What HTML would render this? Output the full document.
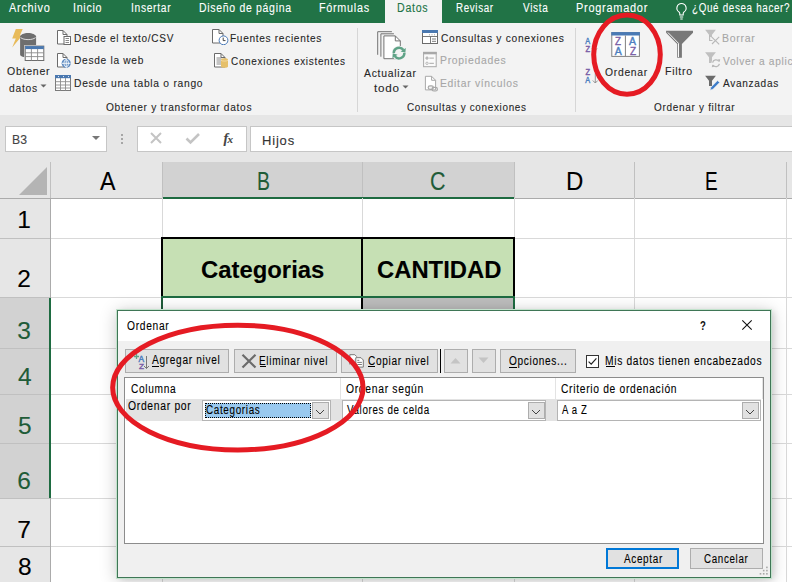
<!DOCTYPE html>
<html><head><meta charset="utf-8"><style>
html,body{margin:0;padding:0}
body{width:792px;height:582px;overflow:hidden;position:relative;background:#fff;font-family:"Liberation Sans",sans-serif}
body>div,body>svg{position:absolute}
.t{white-space:nowrap;-webkit-text-stroke:0.1px currentColor}
</style></head><body>
<div style="left:0px;top:0px;width:792px;height:23px;background:#217346"></div>
<div style="left:385px;top:0px;width:57px;height:23px;background:#f3f3f3"></div>
<div class="t" style="left:9px;top:2.34px;font-size:12px;line-height:12px;letter-spacing:0.8px;transform:scaleX(0.9100);transform-origin:0 0;color:#ffffff">Archivo</div>
<div class="t" style="left:73.42px;top:2.34px;font-size:12px;line-height:12px;letter-spacing:0.8px;transform:scaleX(0.8919);transform-origin:0 0;color:#ffffff">Inicio</div>
<div class="t" style="left:130.68px;top:2.34px;font-size:12px;line-height:12px;letter-spacing:0.8px;transform:scaleX(0.8547);transform-origin:0 0;color:#ffffff">Insertar</div>
<div class="t" style="left:199.2px;top:2.34px;font-size:12px;line-height:12px;letter-spacing:0.8px;transform:scaleX(0.8731);transform-origin:0 0;color:#ffffff">Diseño de página</div>
<div class="t" style="left:318.68px;top:2.34px;font-size:12px;line-height:12px;letter-spacing:0.8px;transform:scaleX(0.9006);transform-origin:0 0;color:#ffffff">Fórmulas</div>
<div class="t" style="left:456.44px;top:2.34px;font-size:12px;line-height:12px;letter-spacing:0.8px;transform:scaleX(0.8146);transform-origin:0 0;color:#ffffff">Revisar</div>
<div class="t" style="left:523px;top:2.34px;font-size:12px;line-height:12px;letter-spacing:0.8px;transform:scaleX(0.8325);transform-origin:0 0;color:#ffffff">Vista</div>
<div class="t" style="left:575.94px;top:2.34px;font-size:12px;line-height:12px;letter-spacing:0.8px;transform:scaleX(0.9144);transform-origin:0 0;color:#ffffff">Programador</div>
<div class="t" style="left:692.18px;top:2.34px;font-size:12px;line-height:12px;letter-spacing:0.8px;transform:scaleX(0.8205);transform-origin:0 0;color:#ffffff">¿Qué desea hacer?</div>
<div class="t" style="left:397.44px;top:2.34px;font-size:12px;line-height:12px;letter-spacing:0.8px;transform:scaleX(0.8869);transform-origin:0 0;color:#217346">Datos</div>
<svg style="left:675px;top:2px;" width="13" height="19" viewBox="0 0 13 19"><path d="M6.5 1.5a4.6 4.6 0 0 0-2.6 8.4c.6.5.9 1.1.9 1.8v1.3h3.4v-1.3c0-.7.3-1.3.9-1.8A4.6 4.6 0 0 0 6.5 1.5z" fill="none" stroke="#fff" stroke-width="1.1"/><path d="M4.8 15h3.4M5.3 17h2.4" stroke="#fff" stroke-width="1.1"/></svg>
<div style="left:0px;top:23px;width:792px;height:92px;background:#f3f3f3"></div>
<div style="left:0px;top:115px;width:792px;height:1px;background:#d4d4d4"></div>
<div style="left:357px;top:28px;width:1px;height:84px;background:#d6d6d6"></div>
<div style="left:575px;top:28px;width:1px;height:84px;background:#d6d6d6"></div>
<div style="left:0px;top:115px;width:792px;height:467px;background:#e6e6e6"></div>
<div style="left:5px;top:126px;width:102px;height:26px;background:#fff;border:1px solid #c6c6c6;box-sizing:border-box"></div>
<div class="t" style="left:11.94px;top:134.34px;font-size:12px;line-height:12px;transform:scaleX(1.0184);transform-origin:0 0;color:#444">B3</div>
<svg style="left:91px;top:135px;" width="10" height="6" viewBox="0 0 10 6"><path d="M1 1h8L5 5z" fill="#777"/></svg>
<div style="left:121px;top:134px;width:2px;height:2px;background:#a6a6a6"></div>
<div style="left:121px;top:138px;width:2px;height:2px;background:#a6a6a6"></div>
<div style="left:121px;top:142px;width:2px;height:2px;background:#a6a6a6"></div>
<div style="left:137px;top:126px;width:110px;height:26px;background:#fff;border:1px solid #c6c6c6;box-sizing:border-box"></div>
<svg style="left:149px;top:131px;" width="14" height="14" viewBox="0 0 14 14"><path d="M2 2L12 12M12 2L2 12" stroke="#c4c4c4" stroke-width="2"/></svg>
<svg style="left:185px;top:132px;" width="16" height="13" viewBox="0 0 16 13"><path d="M1.5 6.5L5.5 10.5L14 2" fill="none" stroke="#c4c4c4" stroke-width="2.6"/></svg>
<div class="t" style="left:223.5px;top:131.5px;font-family:'Liberation Serif',serif;font-style:italic;font-weight:bold;font-size:14px;line-height:14px;color:#444;letter-spacing:-0.8px">f<span style="font-size:11px">x</span></div>
<div style="left:250px;top:126px;width:542px;height:26px;background:#fff;border:1px solid #c6c6c6;border-right:none;box-sizing:border-box"></div>
<div class="t" style="left:261.7px;top:134.52px;font-size:12.5px;line-height:12.5px;letter-spacing:0.8px;transform:scaleX(1.0376);transform-origin:0 0;color:#333">Hijos</div>
<div style="left:50px;top:198px;width:742px;height:384px;background:#fff"></div>
<svg style="left:18px;top:166px;" width="30" height="30" viewBox="0 0 30 30"><path d="M29 1V29H1z" fill="#b4b4b4"/></svg>
<div style="left:163px;top:162px;width:351px;height:36px;background:#d2d2d2"></div>
<div style="left:0px;top:298px;width:50px;height:200px;background:#d2d2d2"></div>
<div style="left:50px;top:162px;width:1px;height:36px;background:#c0c0c0"></div>
<div style="left:162px;top:162px;width:1px;height:36px;background:#c0c0c0"></div>
<div style="left:362px;top:162px;width:1px;height:36px;background:#c0c0c0"></div>
<div style="left:514px;top:162px;width:1px;height:36px;background:#c0c0c0"></div>
<div style="left:634px;top:162px;width:1px;height:36px;background:#c0c0c0"></div>
<div style="left:786px;top:162px;width:1px;height:36px;background:#c0c0c0"></div>
<div style="left:0px;top:198px;width:792px;height:1px;background:#ababab"></div>
<div style="left:163px;top:197px;width:351px;height:2px;background:#1e6b41"></div>
<div style="left:0px;top:238px;width:50px;height:1px;background:#c0c0c0"></div>
<div style="left:0px;top:297px;width:50px;height:1px;background:#c0c0c0"></div>
<div style="left:0px;top:348px;width:50px;height:1px;background:#c0c0c0"></div>
<div style="left:0px;top:394px;width:50px;height:1px;background:#c0c0c0"></div>
<div style="left:0px;top:443px;width:50px;height:1px;background:#c0c0c0"></div>
<div style="left:0px;top:498px;width:50px;height:1px;background:#c0c0c0"></div>
<div style="left:0px;top:546px;width:50px;height:1px;background:#c0c0c0"></div>
<div style="left:50px;top:198px;width:1px;height:384px;background:#ababab"></div>
<div style="left:49px;top:298px;width:2px;height:200px;background:#1e6b41"></div>
<div style="left:162px;top:198px;width:1px;height:384px;background:#d9d9d9"></div>
<div style="left:362px;top:198px;width:1px;height:384px;background:#d9d9d9"></div>
<div style="left:514px;top:198px;width:1px;height:384px;background:#d9d9d9"></div>
<div style="left:634px;top:198px;width:1px;height:384px;background:#d9d9d9"></div>
<div style="left:786px;top:198px;width:1px;height:384px;background:#d9d9d9"></div>
<div style="left:51px;top:238px;width:741px;height:1px;background:#d9d9d9"></div>
<div style="left:51px;top:297px;width:741px;height:1px;background:#d9d9d9"></div>
<div style="left:51px;top:348px;width:741px;height:1px;background:#d9d9d9"></div>
<div style="left:51px;top:394px;width:741px;height:1px;background:#d9d9d9"></div>
<div style="left:51px;top:443px;width:741px;height:1px;background:#d9d9d9"></div>
<div style="left:51px;top:498px;width:741px;height:1px;background:#d9d9d9"></div>
<div style="left:51px;top:546px;width:741px;height:1px;background:#d9d9d9"></div>
<div class="t" style="left:100.02px;top:169.24px;font-size:25px;line-height:25px;transform:scaleX(0.9269);transform-origin:0 0;color:#000">A</div>
<div class="t" style="left:256.94px;top:169.24px;font-size:25px;line-height:25px;transform:scaleX(0.7769);transform-origin:0 0;color:#1f5c38">B</div>
<div class="t" style="left:430.44px;top:169.24px;font-size:25px;line-height:25px;transform:scaleX(0.8563);transform-origin:0 0;color:#1f5c38">C</div>
<div class="t" style="left:566.4px;top:169.24px;font-size:25px;line-height:25px;transform:scaleX(0.9620);transform-origin:0 0;color:#000">D</div>
<div class="t" style="left:704.7px;top:169.24px;font-size:25px;line-height:25px;transform:scaleX(0.7586);transform-origin:0 0;color:#000">E</div>
<div class="t" style="left:17.16px;top:207.76px;font-size:24.5px;line-height:24.5px;color:#000">1</div>
<div class="t" style="left:17.16px;top:267.26px;font-size:24.5px;line-height:24.5px;color:#000">2</div>
<div class="t" style="left:17.16px;top:318.56px;font-size:24.5px;line-height:24.5px;color:#1f5c38">3</div>
<div class="t" style="left:17.96px;top:364.66px;font-size:24.5px;line-height:24.5px;color:#1f5c38">4</div>
<div class="t" style="left:17.96px;top:413.96px;font-size:24.5px;line-height:24.5px;color:#1f5c38">5</div>
<div class="t" style="left:17.16px;top:469.16px;font-size:24.5px;line-height:24.5px;color:#1f5c38">6</div>
<div class="t" style="left:17.16px;top:517.76px;font-size:24.5px;line-height:24.5px;color:#000">7</div>
<div class="t" style="left:17.96px;top:555.06px;font-size:24.5px;line-height:24.5px;color:#000">8</div>
<div style="left:161px;top:237px;width:354px;height:61px;background:#c6e0b4;border:2px solid #000;border-bottom:none;box-sizing:border-box"></div>
<div style="left:361px;top:237px;width:2px;height:61px;background:#000"></div>
<div style="left:161px;top:296px;width:354px;height:2px;background:#1e6b41"></div>
<div class="t" style="left:200.68px;top:258.18px;font-size:24px;line-height:24px;font-weight:bold;transform:scaleX(0.9942);transform-origin:0 0;color:#000">Categorias</div>
<div class="t" style="left:376.68px;top:258.38px;font-size:24px;line-height:24px;font-weight:bold;transform:scaleX(0.9928);transform-origin:0 0;color:#000">CANTIDAD</div>
<div style="left:363px;top:298px;width:150px;height:14px;background:#bdbdbd"></div>
<div style="left:361px;top:298px;width:2px;height:14px;background:#000"></div>
<div style="left:513px;top:298px;width:2px;height:14px;background:#1e6b41"></div>
<div style="left:161px;top:298px;width:2px;height:14px;background:#1f5c3a"></div>
<svg style="left:10px;top:27px;" width="36" height="36" viewBox="0 0 36 36"><path d="M5.8 1.9H12.7L9.8 8.8H12L2.2 20.6L5.8 11.4H2.2z" fill="#e8bb5a"/><path d="M10.1 9.5C10.1 7.6 14 5.9 18.1 5.9S26.1 7.6 26.1 9.5V27.5C26.1 29.4 22.2 30.4 18.1 30.4S10.1 29.4 10.1 27.5z" fill="#6e6e6e"/><path d="M10.6 10.6C12.5 12 15 12.6 18.1 12.6S23.7 12 25.6 10.6" fill="none" stroke="#e9e9e9" stroke-width="0.9"/><rect x="14.2" y="18.1" width="20.6" height="16.4" fill="#f3f3f3"/><rect x="15.2" y="19.1" width="18.6" height="14.4" fill="#fff" stroke="#6d6d6d" stroke-width="1"/><rect x="15.2" y="19.1" width="18.6" height="3" fill="#4a78b0"/><path d="M15.2 25.8H33.8M15.2 29.6H33.8M21.4 22V33.5M27.6 22V33.5" stroke="#8a8a8a" stroke-width="0.9"/></svg>
<div class="t" style="left:6.5px;top:66.47px;font-size:11.5px;line-height:11.5px;letter-spacing:0.8px;transform:scaleX(0.9166);transform-origin:0 0;color:#262626">Obtener</div>
<div class="t" style="left:9.48px;top:82.77px;font-size:11.5px;line-height:11.5px;letter-spacing:0.8px;transform:scaleX(0.8950);transform-origin:0 0;color:#262626">datos</div>
<svg style="left:40px;top:84px;" width="7" height="4" viewBox="0 0 7 4"><path d="M0.5 0.5H6.5L3.5 3.5z" fill="#666"/></svg>
<svg style="left:55px;top:28px;" width="18" height="18" viewBox="0 0 18 18"><path d="M2.5 2.5H8L12 6.5V16H2.5z" fill="#fff" stroke="#6b6b6b" stroke-width="1"/><path d="M8 2.5V6.5H12" fill="none" stroke="#6b6b6b" stroke-width="1"/><rect x="9" y="8.5" width="6.5" height="8" fill="#fff" stroke="#6b6b6b"/><path d="M10.5 10.5h3.5M10.5 12.5h3.5M10.5 14.5h3.5" stroke="#6b6b6b" stroke-width="0.8"/></svg>
<div class="t" style="left:73.96px;top:32.57px;font-size:11.5px;line-height:11.5px;letter-spacing:0.8px;transform:scaleX(0.8718);transform-origin:0 0;color:#262626">Desde el texto/CSV</div>
<svg style="left:55px;top:51px;" width="18" height="18" viewBox="0 0 18 18"><path d="M2.5 2.5H8L12 6.5V16H2.5z" fill="#fff" stroke="#6b6b6b" stroke-width="1"/><path d="M8 2.5V6.5H12" fill="none" stroke="#6b6b6b" stroke-width="1"/><circle cx="11.2" cy="12.3" r="4.6" fill="#5b89c0"/><path d="M6.8 12.3h8.8M11.2 7.7v9.2" stroke="#fff" stroke-width="0.9"/><ellipse cx="11.2" cy="12.3" rx="2.3" ry="3.6" fill="none" stroke="#fff" stroke-width="0.8"/></svg>
<div class="t" style="left:73.96px;top:55.37px;font-size:11.5px;line-height:11.5px;letter-spacing:0.8px;transform:scaleX(0.8837);transform-origin:0 0;color:#262626">Desde la web</div>
<svg style="left:54px;top:74px;" width="18" height="18" viewBox="0 0 18 18"><rect x="1.5" y="1.5" width="15" height="15" fill="#fff" stroke="#7a7a7a"/><rect x="1" y="1" width="16" height="3.2" fill="#4a78b0"/><path d="M1.5 7.7h15M1.5 11h15M1.5 14h15M6.5 4v12.5M11.5 4v12.5" stroke="#8c8c8c" stroke-width="0.9"/><path d="M4 2.6h1M9 2.6h1M14 2.6h1" stroke="#fff" stroke-width="0.9"/></svg>
<div class="t" style="left:73.96px;top:78.17px;font-size:11.5px;line-height:11.5px;letter-spacing:0.8px;transform:scaleX(0.8958);transform-origin:0 0;color:#262626">Desde una tabla o rango</div>
<svg style="left:210px;top:27px;" width="20" height="18" viewBox="0 0 20 18"><path d="M2.5 2.5H9L13 6.5V16H2.5z" fill="#fff" stroke="#6b6b6b" stroke-width="1"/><path d="M9 2.5V6.5H13" fill="none" stroke="#6b6b6b" stroke-width="1"/><circle cx="13.5" cy="13.3" r="4.4" fill="#fff" stroke="#4a7ab8" stroke-width="1"/><path d="M13.2 10.6v3h2.3" fill="none" stroke="#333" stroke-width="0.9"/></svg>
<div class="t" style="left:230.18px;top:32.77px;font-size:11.5px;line-height:11.5px;letter-spacing:0.8px;transform:scaleX(0.8761);transform-origin:0 0;color:#262626">Fuentes recientes</div>
<svg style="left:210px;top:51px;" width="20" height="18" viewBox="0 0 20 18"><path d="M4.5 2.5H11L15 6.5V16H4.5z" fill="#fff" stroke="#6b6b6b" stroke-width="1"/><path d="M11 2.5V6.5H15" fill="none" stroke="#6b6b6b" stroke-width="1"/><path d="M6.5 7h5M6.5 9h5M6.5 11h5M6.5 13h5" stroke="#6b6b6b" stroke-width="0.8"/><path d="M11 8.5c0-.8 1.6-1.3 3.5-1.3S18 7.7 18 8.5V15.5c0 .8-1.6 1.3-3.5 1.3S11 16.3 11 15.5z" fill="#e6c06a"/><path d="M11 9.3c1 .6 2.2.8 3.5.8s2.5-.2 3.5-.8" fill="none" stroke="#f6e3b5" stroke-width="0.7"/></svg>
<div class="t" style="left:230.98px;top:55.77px;font-size:11.5px;line-height:11.5px;letter-spacing:0.8px;transform:scaleX(0.8657);transform-origin:0 0;color:#262626">Conexiones existentes</div>
<div class="t" style="left:105.76px;top:102.17px;font-size:11.5px;line-height:11.5px;letter-spacing:0.8px;transform:scaleX(0.8840);transform-origin:0 0;color:#262626">Obtener y transformar datos</div>
<svg style="left:372px;top:27px;" width="40" height="38" viewBox="0 0 40 38"><path d="M5.7 27.8V4.7H19.9" fill="none" stroke="#737373" stroke-width="1"/><path d="M8.9 29.7V6.8H21.9" fill="none" stroke="#737373" stroke-width="1"/><path d="M11.9 31.7V8.9H23.3L28.3 13.9V31.7z" fill="#fff" stroke="#737373" stroke-width="1"/><path d="M23.3 8.9V13.9H28.3" fill="none" stroke="#737373" stroke-width="1"/><circle cx="27.1" cy="26.1" r="7.4" fill="#f3f3f3"/><circle cx="27.1" cy="26.1" r="8.2" fill="#f3f3f3" fill-opacity="0"/><path d="M21.80 26.10A5.30 5.30 0 0 1 31.44 23.06 M32.40 26.10A5.30 5.30 0 0 1 22.76 29.14" fill="none" stroke="#5fa387" stroke-width="2.5"/><path d="M33.39 25.85L33.83 20.90L28.59 24.57z M20.81 26.35L20.37 31.30L25.61 27.63z" fill="#5fa387"/></svg>
<div class="t" style="left:363.98px;top:67.57px;font-size:11.5px;line-height:11.5px;letter-spacing:0.8px;transform:scaleX(0.9019);transform-origin:0 0;color:#262626">Actualizar</div>
<div class="t" style="left:373.74px;top:82.97px;font-size:11.5px;line-height:11.5px;letter-spacing:0.8px;transform:scaleX(1.0107);transform-origin:0 0;color:#262626">todo</div>
<svg style="left:402px;top:85px;" width="7" height="4" viewBox="0 0 7 4"><path d="M0.5 0.5H6.5L3.5 3.5z" fill="#666"/></svg>
<svg style="left:420px;top:28px;" width="20" height="18" viewBox="0 0 20 18"><rect x="2.5" y="2.5" width="15" height="13" fill="#fff" stroke="#6b6b6b"/><rect x="2" y="2" width="16" height="3" fill="#4a78b0"/><path d="M10.5 8.5v7M2.5 8.5h15M12 11h4M12 13.3h4" stroke="#6b6b6b" stroke-width="0.9"/><path d="M9 6.8h1M11.5 6.8h1M14 6.8h1" stroke="#8a8a8a" stroke-width="0.8"/></svg>
<div class="t" style="left:440.98px;top:32.57px;font-size:11.5px;line-height:11.5px;letter-spacing:0.8px;transform:scaleX(0.8880);transform-origin:0 0;color:#262626">Consultas y conexiones</div>
<svg style="left:420px;top:50px;" width="20" height="20" viewBox="0 0 20 20"><rect x="3.6" y="2.4" width="12.6" height="14.3" fill="#fafafa" stroke="#a8a8a8"/><rect x="3.1" y="1.9" width="13.6" height="2.4" fill="#a8a8a8"/><circle cx="7" cy="8.1" r="1.2" fill="#c8c8c8" stroke="#a8a8a8" stroke-width="0.8"/><circle cx="7" cy="13.3" r="1.2" fill="none" stroke="#a8a8a8" stroke-width="0.8"/><path d="M9.3 8.1h4.6M9.3 13.3h4.6" stroke="#a8a8a8" stroke-width="1"/></svg>
<div class="t" style="left:440.18px;top:55.37px;font-size:11.5px;line-height:11.5px;letter-spacing:0.8px;transform:scaleX(0.9037);transform-origin:0 0;color:#a6a6a6">Propiedades</div>
<svg style="left:420px;top:74px;" width="20" height="20" viewBox="0 0 20 20"><path d="M5.4 2.3H11.6L15.6 6.3V15.9H5.4z" fill="#fff" stroke="#a8a8a8" stroke-width="1"/><path d="M11.6 2.3V6.3H15.6" fill="none" stroke="#a8a8a8" stroke-width="1"/><rect x="8.2" y="11.8" width="5.2" height="3.6" rx="1.8" fill="#f3f3f3" stroke="#a8a8a8" stroke-width="1.2"/><rect x="12" y="13.4" width="5.4" height="3.6" rx="1.8" fill="none" stroke="#a8a8a8" stroke-width="1.2"/></svg>
<div class="t" style="left:440.18px;top:78.17px;font-size:11.5px;line-height:11.5px;letter-spacing:0.8px;transform:scaleX(0.8985);transform-origin:0 0;color:#a6a6a6">Editar vínculos</div>
<div class="t" style="left:407.02px;top:101.97px;font-size:11.5px;line-height:11.5px;letter-spacing:0.8px;transform:scaleX(0.8608);transform-origin:0 0;color:#262626">Consultas y conexiones</div>
<svg style="left:582px;top:34px;" width="18" height="20" viewBox="0 0 18 20"><text transform="translate(3.3 10) scale(0.751 1)" x="-0" y="0" font-family="Liberation Sans" font-size="9.74" fill="#4e7fbf" stroke="#4e7fbf" stroke-width="0.45">A</text><text transform="translate(3.4 17.7) scale(0.774 1)" x="-0" y="0" font-family="Liberation Sans" font-size="9.74" fill="#7a5ea6" stroke="#7a5ea6" stroke-width="0.45">Z</text><path d="M12.5 7v10M10 14.5l2.5 2.5 2.5-2.5" fill="none" stroke="#8a8a8a" stroke-width="0.9"/></svg>
<svg style="left:582px;top:66px;" width="18" height="20" viewBox="0 0 18 20"><text transform="translate(3.4 8.8) scale(0.798 1)" x="-0" y="0" font-family="Liberation Sans" font-size="9.45" fill="#7a5ea6" stroke="#7a5ea6" stroke-width="0.45">Z</text><text transform="translate(3.3 16.5) scale(0.751 1)" x="-0" y="0" font-family="Liberation Sans" font-size="9.74" fill="#4e7fbf" stroke="#4e7fbf" stroke-width="0.45">A</text><path d="M13.3 7v10M10.8 14.5l2.5 2.5 2.5-2.5" fill="none" stroke="#8a8a8a" stroke-width="0.9"/></svg>
<svg style="left:609px;top:30px;" width="34" height="30" viewBox="0 0 34 30"><rect x="2.8" y="2.6" width="27.6" height="23.8" fill="#fff" stroke="#808080"/><rect x="2.3" y="2.1" width="28.6" height="3.4" fill="#4a7ab5"/><path d="M16.4 5.5V26.4" stroke="#808080"/><text transform="translate(6 14.7) scale(0.890 1)" x="-0" y="0" font-family="Liberation Sans" font-size="11.05" fill="#7a5ea6" stroke="#7a5ea6" stroke-width="0.45">Z</text><text transform="translate(5.8 24.9) scale(0.946 1)" x="-0" y="0" font-family="Liberation Sans" font-size="11.05" fill="#4e7fbf" stroke="#4e7fbf" stroke-width="0.45">A</text><text transform="translate(20 14.7) scale(0.946 1)" x="-0" y="0" font-family="Liberation Sans" font-size="11.05" fill="#4e7fbf" stroke="#4e7fbf" stroke-width="0.45">A</text><text transform="translate(20.9 24.9) scale(0.905 1)" x="-0" y="0" font-family="Liberation Sans" font-size="11.05" fill="#7a5ea6" stroke="#7a5ea6" stroke-width="0.45">Z</text></svg>
<div class="t" style="left:604.76px;top:66.57px;font-size:11.5px;line-height:11.5px;letter-spacing:0.8px;transform:scaleX(0.8987);transform-origin:0 0;color:#262626">Ordenar</div>
<svg style="left:664px;top:29px;" width="32" height="31" viewBox="0 0 32 31"><path d="M2.1 1.8H29V3.85L17.9 15V28.7H13.2V15L2.1 3.85z" fill="#787878"/><path d="M3.9 3.5L14.5 14.3V28.1" fill="none" stroke="#fafafa" stroke-width="1"/></svg>
<div class="t" style="left:665.42px;top:66.47px;font-size:11.5px;line-height:11.5px;letter-spacing:0.8px;transform:scaleX(0.9188);transform-origin:0 0;color:#262626">Filtro</div>
<svg style="left:704px;top:29px;" width="17" height="17" viewBox="0 0 17 17"><path d="M1.1 0.8H11.9L8 5.8V8H5V5.8z" fill="#c0c0c0"/><path d="M5.6 6V11.5H8.5" fill="none" stroke="#b8b8b8" stroke-width="1.1"/><path d="M7.6 7.8L15.2 15.4M15.2 7.8L8 15" stroke="#b8b8b8" stroke-width="1.1"/></svg>
<div class="t" style="left:722.18px;top:32.67px;font-size:11.5px;line-height:11.5px;letter-spacing:0.8px;transform:scaleX(0.9133);transform-origin:0 0;color:#a6a6a6">Borrar</div>
<svg style="left:704px;top:51px;" width="18" height="18" viewBox="0 0 18 18"><path d="M1.1 1.3H11.9L8 6.3V12H5V6.3z" fill="#c0c0c0"/><circle cx="12" cy="12.2" r="4.6" fill="#f3f3f3"/><path d="M8.6 11.6A3.5 3.5 0 0 1 14.9 10.3M15.4 12.8A3.5 3.5 0 0 1 9.1 14.1" fill="none" stroke="#b8b8b8" stroke-width="1.3"/><path d="M13.6 8.6L16.2 8.2L15.8 10.9z M10.4 15.8L7.8 16.2L8.2 13.5z" fill="#b8b8b8"/></svg>
<div class="t" style="left:722.98px;top:55.67px;font-size:11.5px;line-height:11.5px;letter-spacing:0.8px;transform:scaleX(0.8822);transform-origin:0 0;color:#a6a6a6">Volver a aplicar</div>
<svg style="left:704px;top:74px;" width="18" height="18" viewBox="0 0 18 18"><path d="M1.1 1.7H11.9L8 6.8V12H5V6.8z" fill="#6b6b6b"/><path d="M6 16.2L7 13.2L13.6 6.6L15.6 8.6L9 15.2z" fill="#3d7cc9" stroke="#f3f3f3" stroke-width="0.6"/></svg>
<div class="t" style="left:722.98px;top:78.47px;font-size:11.5px;line-height:11.5px;letter-spacing:0.8px;transform:scaleX(0.8756);transform-origin:0 0;color:#262626">Avanzadas</div>
<div class="t" style="left:653.74px;top:101.97px;font-size:11.5px;line-height:11.5px;letter-spacing:0.8px;transform:scaleX(0.8685);transform-origin:0 0;color:#262626">Ordenar y filtrar</div>
<div style="left:117px;top:310px;width:654px;height:268px;background:#f0f0f0;border:1px solid #3f7656;box-sizing:border-box;box-shadow:0 0 0 1px #c2e2cc,0 2px 16px 1px rgba(0,0,0,0.2),3px 1px 6px rgba(0,0,0,0.1)"></div>
<div style="left:118px;top:311px;width:652px;height:30px;background:#fff"></div>
<div class="t" style="left:126.76px;top:320.24px;font-size:12px;line-height:12px;letter-spacing:0.8px;transform:scaleX(0.8546);transform-origin:0 0;color:#000">Ordenar</div>
<div class="t" style="left:700.02px;top:319.47px;font-size:13.5px;line-height:13.5px;font-weight:bold;transform:scaleX(0.7065);transform-origin:0 0;color:#111">?</div>
<svg style="left:741px;top:319px;" width="13" height="12" viewBox="0 0 13 12"><path d="M1.3 1.3L10.7 10.7M10.7 1.3L1.3 10.7" stroke="#111" stroke-width="1.1"/></svg>
<div style="left:125px;top:349px;width:104px;height:24px;background:#e1e1e1;border:1px solid #adadad;box-sizing:border-box"></div>
<svg style="left:133px;top:353px;" width="18" height="18" viewBox="0 0 18 18"><path d="M3.5 1v5M1 3.5h5" stroke="#5fa387" stroke-width="1.3"/><text transform="translate(5.5 9.1) scale(1.027 1)" x="-0" y="0" font-family="Liberation Sans" font-size="8.14" fill="#4e7fbf" stroke="#4e7fbf" stroke-width="0.45">A</text><text transform="translate(6 15.7) scale(1.084 1)" x="-0" y="0" font-family="Liberation Sans" font-size="7.56" fill="#7a5ea6" stroke="#7a5ea6" stroke-width="0.45">Z</text><path d="M13.5 3v12.5M11 13l2.5 2.5 2.5-2.5" fill="none" stroke="#777" stroke-width="1"/></svg>
<div class="t" style="left:152px;top:354.14px;font-size:12px;line-height:12px;letter-spacing:0.8px;transform:scaleX(0.8441);transform-origin:0 0;color:#000">Agregar nivel</div>
<div style="left:152px;top:366px;width:7px;height:1px;background:#000"></div>
<div style="left:233.5px;top:349px;width:103.5px;height:24px;background:#e1e1e1;border:1px solid #adadad;box-sizing:border-box"></div>
<svg style="left:240px;top:353px;" width="18" height="16" viewBox="0 0 18 16"><path d="M2.5 1.8L15.5 14.5M15.5 1.8L2.5 14.5" stroke="#6b6b6b" stroke-width="2.2"/></svg>
<div class="t" style="left:259.18px;top:355.24px;font-size:12px;line-height:12px;letter-spacing:0.8px;transform:scaleX(0.8364);transform-origin:0 0;color:#000">Eliminar nivel</div>
<div style="left:260.3px;top:366px;width:6px;height:1px;background:#000"></div>
<div style="left:341px;top:349px;width:97px;height:24px;background:#e1e1e1;border:1px solid #adadad;box-sizing:border-box"></div>
<svg style="left:347px;top:352px;" width="18" height="18" viewBox="0 0 18 18"><path d="M2.8 12.5V2.7H7.8L9.8 4.7" fill="#fff" stroke="#6b6b6b" stroke-width="0.9"/><path d="M8.8 5.7H14L16.3 8V15.1H8.8z" fill="#fff" stroke="#6b6b6b" stroke-width="0.9"/><path d="M10.3 8.3h2M10.3 10.4h4.6M10.3 12.5h4.6" stroke="#6b6b6b" stroke-width="0.9"/></svg>
<div class="t" style="left:367.98px;top:355.24px;font-size:12px;line-height:12px;letter-spacing:0.8px;transform:scaleX(0.8423);transform-origin:0 0;color:#000">Copiar nivel</div>
<div style="left:368.3px;top:366px;width:7px;height:1px;background:#000"></div>
<div style="left:440px;top:348.5px;width:1.2px;height:24.5px;background:#000"></div>
<div style="left:444px;top:349px;width:24px;height:24px;background:#e1e1e1;border:1px solid #adadad;box-sizing:border-box"></div>
<svg style="left:450px;top:357px;" width="11" height="7" viewBox="0 0 11 7"><path d="M0.5 6.5L5.5 1L10.5 6.5z" fill="#c4c4c4"/></svg>
<div style="left:472px;top:349px;width:24px;height:24px;background:#e1e1e1;border:1px solid #adadad;box-sizing:border-box"></div>
<svg style="left:478px;top:357px;" width="11" height="7" viewBox="0 0 11 7"><path d="M0.5 0.5L5.5 6L10.5 0.5z" fill="#c4c4c4"/></svg>
<div style="left:500px;top:349px;width:76px;height:24px;background:#e1e1e1;border:1px solid #adadad;box-sizing:border-box"></div>
<div class="t" style="left:508.98px;top:355.14px;font-size:12px;line-height:12px;letter-spacing:0.8px;transform:scaleX(0.8413);transform-origin:0 0;color:#000">Opciones...</div>
<div style="left:509.3px;top:366.5px;width:8px;height:1px;background:#000"></div>
<div style="left:586px;top:355px;width:13px;height:13px;background:#fff;border:1px solid #333;box-sizing:border-box"></div>
<svg style="left:586px;top:355px;" width="13" height="13" viewBox="0 0 13 13"><path d="M2.6 6.6L5.2 9.2L10.4 3.4" fill="none" stroke="#222" stroke-width="1.2"/></svg>
<div class="t" style="left:604.92px;top:354.94px;font-size:12px;line-height:12px;letter-spacing:0.8px;transform:scaleX(0.8523);transform-origin:0 0;color:#000">Mis datos tienen encabezados</div>
<div style="left:606.2px;top:366px;width:9px;height:1px;background:#000"></div>
<div style="left:124px;top:377px;width:640px;height:167px;background:#fff;border:1px solid #8c8c8c;box-sizing:border-box"></div>
<div style="left:340px;top:378px;width:1px;height:21px;background:#e3e3e3"></div>
<div style="left:555px;top:378px;width:1px;height:21px;background:#e3e3e3"></div>
<div style="left:761.5px;top:378px;width:1px;height:21px;background:#e3e3e3"></div>
<div class="t" style="left:131.02px;top:383.24px;font-size:12px;line-height:12px;letter-spacing:0.8px;transform:scaleX(0.8464);transform-origin:0 0;color:#000">Columna</div>
<div class="t" style="left:345.76px;top:383.44px;font-size:12px;line-height:12px;letter-spacing:0.8px;transform:scaleX(0.8622);transform-origin:0 0;color:#000">Ordenar según</div>
<div class="t" style="left:560.76px;top:383.44px;font-size:12px;line-height:12px;letter-spacing:0.8px;transform:scaleX(0.8565);transform-origin:0 0;color:#000">Criterio de ordenación</div>
<div style="left:126px;top:399px;width:635px;height:22px;background:#e3e3e3"></div>
<div class="t" style="left:128.48px;top:400.14px;font-size:12px;line-height:12px;letter-spacing:0.8px;transform:scaleX(0.8630);transform-origin:0 0;color:#000">Ordenar por</div>
<div style="left:202px;top:400px;width:128.5px;height:21px;background:#fff;border:1px solid #b4b4b4;box-sizing:border-box"></div>
<div style="left:312px;top:402px;width:17px;height:17px;background:#e1e1e1;border:1px solid #adadad;box-sizing:border-box"></div>
<svg style="left:315px;top:408.6px;" width="10" height="6" viewBox="0 0 10 6"><path d="M1 1L5 5L9 1" fill="none" stroke="#444" stroke-width="1"/></svg>
<div style="left:204.5px;top:403px;width:106px;height:15px;background:#99c9ef;border:1px dotted #000;box-sizing:border-box"></div>
<div class="t" style="left:206.48px;top:404.34px;font-size:12px;line-height:12px;letter-spacing:0.8px;transform:scaleX(0.8244);transform-origin:0 0;color:#000">Categorias</div>
<div style="left:342px;top:400px;width:204px;height:21px;background:#fff;border:1px solid #b4b4b4;box-sizing:border-box"></div>
<div style="left:527.5px;top:402px;width:17px;height:17px;background:#e1e1e1;border:1px solid #adadad;box-sizing:border-box"></div>
<svg style="left:530.5px;top:408.6px;" width="10" height="6" viewBox="0 0 10 6"><path d="M1 1L5 5L9 1" fill="none" stroke="#444" stroke-width="1"/></svg>
<div class="t" style="left:347.02px;top:404.34px;font-size:12px;line-height:12px;letter-spacing:0.8px;transform:scaleX(0.8176);transform-origin:0 0;color:#000">Valores de celda</div>
<div style="left:556.5px;top:400px;width:204px;height:21px;background:#fff;border:1px solid #b4b4b4;box-sizing:border-box"></div>
<div style="left:742px;top:402px;width:17px;height:17px;background:#e1e1e1;border:1px solid #adadad;box-sizing:border-box"></div>
<svg style="left:745px;top:408.6px;" width="10" height="6" viewBox="0 0 10 6"><path d="M1 1L5 5L9 1" fill="none" stroke="#444" stroke-width="1"/></svg>
<div class="t" style="left:561.5px;top:404.34px;font-size:12px;line-height:12px;letter-spacing:0.8px;transform:scaleX(0.7940);transform-origin:0 0;color:#000">A a Z</div>
<div style="left:605.8px;top:547.8px;width:73.2px;height:21.2px;background:#e1e1e1;border:2px solid #0078d7;box-sizing:border-box"></div>
<div class="t" style="left:623.52px;top:553.24px;font-size:12px;line-height:12px;letter-spacing:0.8px;transform:scaleX(0.8285);transform-origin:0 0;color:#000">Aceptar</div>
<div style="left:690px;top:547.8px;width:73.2px;height:21.2px;background:#e1e1e1;border:1px solid #adadad;box-sizing:border-box"></div>
<div class="t" style="left:703.98px;top:553.24px;font-size:12px;line-height:12px;letter-spacing:0.8px;transform:scaleX(0.8161);transform-origin:0 0;color:#000">Cancelar</div>
<svg style="left:758px;top:565px;" width="11" height="11" viewBox="0 0 11 11"><rect x="8.1" y="1.6" width="1.6" height="1.6" fill="#a8a8a8"/><rect x="4.9" y="4.8" width="1.6" height="1.6" fill="#a8a8a8"/><rect x="8.1" y="4.8" width="1.6" height="1.6" fill="#a8a8a8"/><rect x="1.7" y="8" width="1.6" height="1.6" fill="#a8a8a8"/><rect x="4.9" y="8" width="1.6" height="1.6" fill="#a8a8a8"/><rect x="8.1" y="8" width="1.6" height="1.6" fill="#a8a8a8"/></svg>
<svg style="left:0;top:0" width="792" height="582" viewBox="0 0 792 582"><ellipse cx="627" cy="54.6" rx="33.3" ry="39.6" fill="none" stroke="#e51b23" stroke-width="5"/><ellipse cx="237.85" cy="387.6" rx="125.2" ry="62.35" fill="none" stroke="#e51b23" stroke-width="5"/></svg>
</body></html>
